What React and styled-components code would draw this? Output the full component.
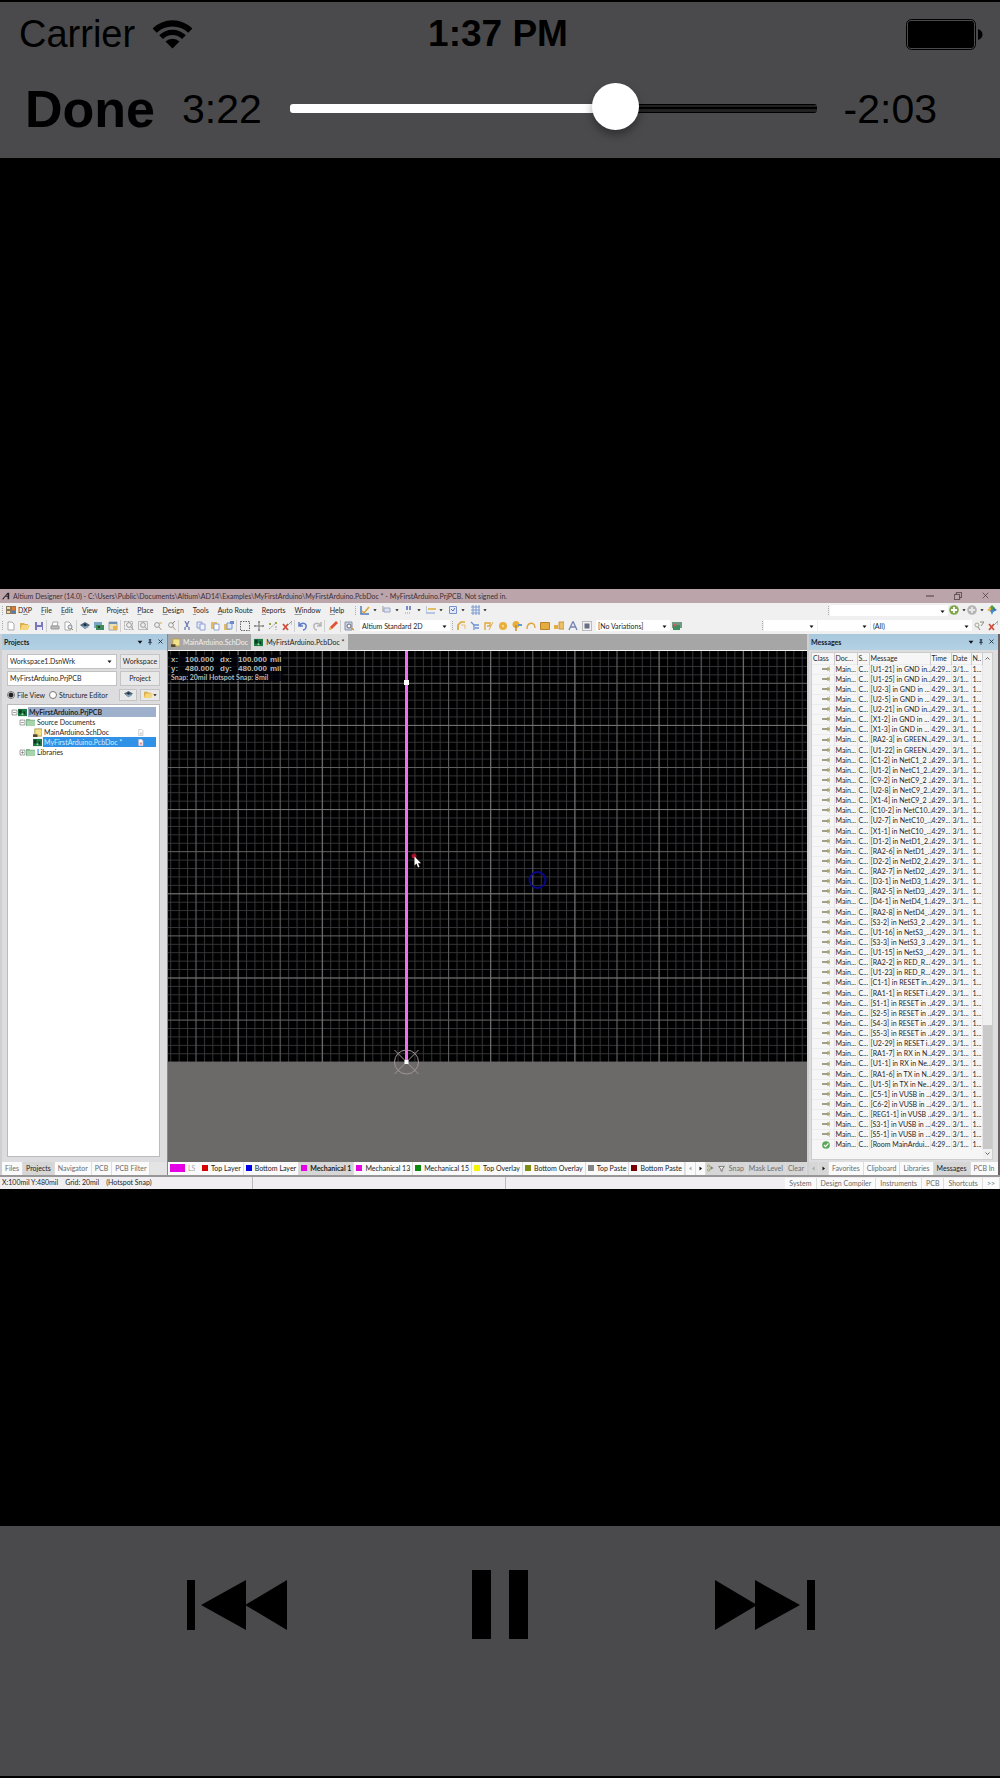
import React, {useState} from 'react';
import styled, {createGlobalStyle} from 'styled-components';

const GlobalStyle = createGlobalStyle`
    * {
        box-sizing: border-box;
    }
    body {
        margin: 0;
        background: #000;
    }
    button, input, select {
        margin: 0;
        padding: 0;
        border: 0;
        border-radius: 0;
        background: none;
        color: inherit;
        font: inherit;
    }
    select {
        appearance: none;
    }
`;

/* ---------- player ---------- */

const Player = styled.div`
    display: flex;
    flex-direction: column;
    min-height: 100vh;
    padding: 2px 0;
    background: #000;
    color: #000;
    font-family: "Liberation Sans", Arial, sans-serif;
`;

const TopBar = styled.header`
    height: 156px;
    background: #4a4a4c;
`;

const StatusLine = styled.div`
    display: grid;
    grid-template-columns: 1fr auto 1fr;
    align-items: center;
    height: 64px;
    padding: 0 17px 0 19px;
    font-size: 38px;
`;

const Carrier = styled.div`
    display: flex;
    align-items: center;
    gap: 18px;
`;

const Clock = styled.strong`
    margin-right: 6px;
    font-size: 37px;
`;

const Battery = styled.svg`
    justify-self: end;
`;

const Scrubber = styled.div`
    display: flex;
    align-items: center;
    height: 84px;
    padding: 0 63px 0 25px;
`;

const DoneButton = styled.button`
    margin-right: 27px;
    padding-top: 2px;
    font-size: 52px;
    font-weight: bold;
`;

const Time = styled.span`
    padding-top: 3px;
    font-size: 41px;
`;

const Track = styled.input`
    flex: 1;
    min-width: 0;
    height: 48px;
    margin: 0 27px 0 28px;
    appearance: none;

    &::-webkit-slider-runnable-track {
        height: 9px;
        border-radius: 3px;
        background:
            linear-gradient(#fff, #fff) 0 0 / 62% 100% no-repeat,
            linear-gradient(#000 0 1px, #222 1px 3px, #000 3px 5px, #222 5px 8px, #000 8px);
    }

    &::-webkit-slider-thumb {
        width: 47px;
        height: 47px;
        margin-top: -21px;
        border-radius: 50%;
        background: #fff;
        box-shadow: 0 5px 8px rgba(0, 0, 0, 0.35);
        appearance: none;
    }
`;

const Stage = styled.main`
    display: flex;
    flex: 1;
    flex-direction: column;
    justify-content: center;
    padding-top: 94px;
`;

const Controls = styled.footer`
    display: flex;
    align-items: flex-start;
    justify-content: space-between;
    height: 250px;
    padding: 43px 185px 0 187px;
    background: #4a4a4c;
`;

const ControlButton = styled.button`
    display: flex;
    align-items: center;
    height: 71px;
`;

/* ---------- designer window ---------- */

const Window = styled.section`
    overflow: hidden;
    background: #f1f0f1;
    color: #262626;
    font-family: Lato, "Open Sans", sans-serif;
    font-size: 7px;
    line-height: 10px;
    white-space: nowrap;
`;

const TitleBar = styled.div`
    display: flex;
    align-items: center;
    height: 14px;
    padding: 0 11px 0 2px;
    background: #bca4ab;
    color: #3a2f33;
`;

const Caption = styled.span`
    flex: 1;
    margin-left: 3px;
`;

const WindowButtons = styled.div`
    display: flex;
    gap: 20px;

    button {
        display: flex;
    }
`;

const Bar = styled.div`
    display: flex;
    align-items: center;
    height: ${props => props.$tall ? "16px" : "15px"};
    padding-bottom: 1px;
    background: #f1f0f1;
`;

const Grip = styled.i`
    flex: none;
    width: 4px;
    height: 9px;
    background: repeating-linear-gradient(#aaa 0 1px, transparent 1px 2px) 2px 0 / 1px 100% no-repeat;
`;

const Split = styled.i`
    flex: none;
    width: 2px;
    height: 12px;
    border-left: 1px solid #cfcfcf;
`;

const MenuItem = styled.button`
    margin-right: 9px;

    u {
        text-underline-offset: 1px;
        text-decoration-color: #999;
    }
`;

const ToolButton = styled.button`
    display: flex;
    align-items: center;
    justify-content: center;
    flex: none;
    width: ${props => props.$width}px;
    height: 14px;
    gap: 3px;
`;

const Spacer = styled.div`
    flex: 1;
`;

const Picker = styled.div`
    position: relative;
    flex: none;
    width: ${props => props.$width}px;
    height: 11px;
    margin-left: ${props => props.$gap || 0}px;
    background: #fff;

    select {
        width: 100%;
        height: 100%;
        padding-left: 2px;
    }

    svg {
        position: absolute;
        top: 4px;
        right: 3px;
        pointer-events: none;
    }
`;

const Desk = styled.div`
    display: flex;
    height: 541px;
    border-right: 2px solid #6b5f60;
    background: #dcdcdc;
`;

const Panel = styled.aside`
    display: flex;
    flex: none;
    flex-direction: column;
    width: ${props => props.$width}px;
    border-left: 2px solid #cfcfd1;
    background: #dddddf;
`;

const PanelHeader = styled.header`
    display: flex;
    align-items: center;
    height: 16px;
    padding: 0 2px 1px 2px;
    background: linear-gradient(#a8c8dd, #b4d1e4);
    color: #15202c;

    strong {
        flex: 1;
    }

    button {
        display: flex;
        justify-content: center;
        width: 10px;
    }
`;

const ProjectForm = styled.form`
    display: grid;
    grid-template-columns: 1fr 40px;
    gap: 2px 3px;
    padding: 4px 7px 2px 5px;
`;

const Field = styled.div`
    position: relative;
    height: 15px;
    border: 1px solid #c2c2c2;
    background: #fff;

    select, input {
        width: 100%;
        height: 12px;
        padding-left: 2px;
        vertical-align: top;
    }

    svg {
        position: absolute;
        top: 4px;
        right: 4px;
        pointer-events: none;
    }
`;

const FormButton = styled.button`
    display: flex;
    align-items: center;
    justify-content: center;
    height: ${props => props.$small ? "12px" : "15px"};
    padding-bottom: 1px;
    border: 1px solid #c4c4c4;
    background: #e9e9e9;
`;

const ViewRow = styled.div`
    display: flex;
    align-items: center;
    grid-column: 1 / -1;
    height: 14px;

    label {
        display: flex;
        align-items: center;
        gap: 2px;
        margin-right: 4px;
    }

    input {
        width: 8px;
        height: 8px;
        border: 1px solid #777;
        border-radius: 50%;
        background: #fff;
        appearance: none;
    }

    input:checked {
        background: radial-gradient(#222 0 2px, #fff 3px);
    }

    button {
        width: 18px;
    }

    button:last-child {
        width: 20px;
        margin-left: 3px;
    }
`;

const Tree = styled.ul`
    flex: 1;
    margin: 0 7px 5px 5px;
    padding: 2px 3px;
    border: 1px solid #bbb;
    background: #fff;
    list-style: none;
`;

const TreeRow = styled.li`
    display: flex;
    align-items: center;
    height: 10px;
    padding-left: ${props => props.$indent}px;
    font-weight: ${props => props.$bold ? "bold" : "normal"};

    > svg {
        flex: none;
    }
`;

const TreeLabel = styled.span`
    display: flex;
    flex: 1;
    align-items: center;
    justify-content: space-between;
    height: 10px;
    margin-left: 1px;
    padding: 0 12px 0 1px;
    background: ${props => props.$fill || "none"};
    color: ${props => props.$selected ? "#d8ecfc" : "inherit"};
`;

const BottomTabs = styled.nav`
    display: flex;
    align-items: stretch;
    flex: none;
    height: 13px;
    overflow: hidden;
    background: #e4e4e4;
`;

const BottomTab = styled.button`
    display: flex;
    align-items: center;
    gap: 3px;
    flex: none;
    padding: 0 ${props => props.$pad || 4}px 1px;
    border-right: 1px solid #ddd;
    background: ${props => props.$active ? "#d6d6d6" : "#fafafa"};
    color: ${props => props.$dark ? "#222" : "#6c6c6c"};
    font-weight: ${props => props.$bold ? "bold" : "normal"};
`;

const Editor = styled.section`
    display: flex;
    flex: 1;
    flex-direction: column;
    min-width: 0;
    border-left: 1px solid #888;
    background: #a6a6a6;
`;

const DocTabs = styled.nav`
    display: flex;
    height: 17px;
    border-bottom: 1px solid #f4f4f4;
`;

const DocTab = styled.button`
    display: flex;
    align-items: center;
    gap: 3px;
    padding: 0 3px;
    background: ${props => props.$active ? "#dedede" : "#a6a6a6"};
    color: ${props => props.$active ? "#222" : "#f0f0f0"};
`;

const Board = styled.div`
    position: relative;
    flex: 1;
    min-height: 0;
    background: #6b6a68;

    > svg {
        display: block;
        width: 100%;
        height: 100%;
    }
`;

const Readout = styled.div`
    position: absolute;
    top: 4px;
    left: 2px;
    padding: 0 1px;
    background: rgba(0, 0, 12, 0.7);
    color: #b9b9b1;
    font-family: "Liberation Sans", Arial, sans-serif;
    font-size: 8px;
    font-weight: bold;
    line-height: 9px;

    dl {
        display: grid;
        grid-template-columns: 14px 35px 18px 32px auto;
        margin: 0;
    }

    dd, dt {
        margin: 0;
    }

    p {
        margin: 0;
        font-family: Lato, "Open Sans", sans-serif;
        font-size: 7px;
        line-height: 8px;
    }
`;

const Swatch = styled.i`
    flex: none;
    width: ${props => props.$wide ? "15px" : "6px"};
    height: ${props => props.$wide ? "8px" : "6px"};
    background: ${props => props.$color};
`;

const LayerSet = styled.button`
    display: flex;
    align-items: center;
    flex: none;
    width: 32px;
    padding: 0 0 1px 2px;
    gap: 3px;
    background: #fafafa;
    color: #aaa;
`;

const MessageBox = styled.div`
    display: flex;
    flex: 1;
    margin: 2px 5px 2px 2px;
    overflow: hidden;
    border: 1px solid #ccc;
    background: #f6f6f6;
`;

const MessageTable = styled.table`
    width: 100%;
    min-width: 0;
    align-self: flex-start;
    border-collapse: collapse;
    table-layout: fixed;

    th, td {
        height: 10px;
        padding: 0 0 0 1px;
        border-right: 1px solid #e6e6e6;
        font-weight: normal;
        line-height: 9px;
        text-align: left;
    }

    th {
        height: 11px;
        border-right-color: #ccc;
    }

    tbody td {
        border-top: 1px solid #ececec;
    }

    tbody tr:nth-child(8n) td {
        height: 11px;
    }

    td svg {
        display: block;
        margin-left: 9px;
    }
`;

const ScrollBar = styled.div`
    display: flex;
    flex: none;
    flex-direction: column;
    align-items: center;
    width: 10px;
    padding: 3px 0;
    background: #f0f0f0;

    i {
        width: 100%;
        height: 124px;
        margin-bottom: 2px;
        background: #c9c9c9;
    }
`;

const StatusBar = styled.footer`
    display: flex;
    align-items: center;
    height: 14px;
    border-top: 2px solid #979797;
    background: #f0eef0;

    span {
        margin-left: 2px;
        margin-right: 5px;
    }
`;

const StatusCell = styled.div`
    flex: none;
    align-self: stretch;
    width: 253px;
    border-right: 1px solid #bbb;
`;

/* ---------- icons ---------- */

const Glyph = ({size = 10, children}) => (
    <svg width={size} height={size} viewBox="0 0 10 10" fill="none" strokeWidth="1">
        {children}
    </svg>
);

const Lens = () => <><circle cx="5" cy="4" r="2.4" stroke="#999" /><path d="M7 6l2.5 3" stroke="#a98" /></>;
const Sheet = ({x = 2, y = 1}) => <path d={`M${x} ${y}h4l2 2v6h-6z`} fill="#fff" stroke="#aaa" />;

const icons = {
    dxp: <><path d="M0 1h10v8H0z" fill="#8d7a5e" /><path d="M1 2h3v2H1zM1 6h3v2H1z" fill="#e8d7a0" /><path d="M6 2h3v3H6z" fill="#e27a2f" /><path d="M6 6h3v2H6z" fill="#5a78b8" /></>,
    page: <Sheet />,
    open: <><path d="M0 2h4l1 1h3v6H0z" fill="#d9b04e" /><path d="M2 4h8L8 9H0z" fill="#f6d67a" /></>,
    save: <><path d="M1 1h8v8H1z" fill="#7a78b8" /><path d="M3 1h4v3H3zM3 6h5v3H3z" fill="#e9e9f7" /></>,
    print: <><path d="M3 1h5L7 5H2z" fill="#fff" stroke="#aaa" /><path d="M1 5h8v3H1z" fill="#bbb" stroke="#999" /></>,
    preview: <><Sheet x={1} /><circle cx="6" cy="6" r="2" stroke="#888" fill="#def" /><path d="M7 7l2 2" stroke="#986" /></>,
    eye: <><path d="M0 4l5-3 5 3-5 4z" fill="#54687c" /><path d="M2 5l3 3 4-2-4-2z" fill="#87a4b9" /><circle cx="5" cy="4" r="1.4" fill="#1c3144" /></>,
    board: <><path d="M0 1h8v6H0z" fill="#7aa6c4" /><path d="M2 4h8v5H2z" fill="#3f8a5a" /><path d="M4 5h2v2H4z" fill="#1a4b2e" /></>,
    panel: <><path d="M1 1h8v8H1z" fill="#efe0b4" stroke="#9fa8b0" /><path d="M1 1h8v2H1z" fill="#6b8fb5" /><path d="M5 5h4v4H5z" fill="#e5b44e" /></>,
    zoomAll: <><path d="M.5.5h8v8h-8z" stroke="#aaa" strokeDasharray="2 1" /><Lens /></>,
    zoomArea: <><path d="M.5.5h9v8h-9z" fill="#eee" stroke="#bbb" /><Lens /></>,
    zoomPlus: <><Lens /><path d="M7 2h3" stroke="#d9a93a" /></>,
    zoomPick: <><Lens /><path d="M6 3l3-3" stroke="#888" /></>,
    cut: <path d="M3 0l3 6M7 0L4 6M3 9V6M7 9V6" stroke="#7484b5" strokeWidth="1.4" />,
    copy: <><path d="M1 1h5v6H1z" fill="#dde6f8" stroke="#8fa1cf" /><path d="M4 3h5v6H4z" fill="#eef3ff" stroke="#8fa1cf" /></>,
    paste: <><path d="M1 1h6v7H1z" fill="#e1bc62" /><path d="M4 3h5v6H4z" fill="#fff" stroke="#8fa1cf" /></>,
    pasteArray: <><path d="M0 3h6v6H0z" fill="#e1bc62" /><path d="M3 2h5v6H3z" fill="#dfe8fa" stroke="#7b93ca" /><path d="M6 0h4v3H6z" fill="#6e89c8" /></>,
    marquee: <path d="M.5.5h9v9h-9z" stroke="#666" strokeDasharray="1.5 1" />,
    move: <path d="M5 0v10M0 5h10M4 1h2M4 9h2M1 4v2M9 4v2" stroke="#777" />,
    nodes: <><path d="M1 8l7-6M8 5v4" stroke="#999" strokeDasharray="2 1" /><path d="M1 2h2v2H1zM7 1h2v2H7z" fill="#9aa93f" /></>,
    clear: <><path d="M1 3l5 6M6 3L1 9" stroke="#d04a38" strokeWidth="1.7" /><path d="M6 4l4-4v4" stroke="#999" /></>,
    undo: <path d="M1 1v4h4M1.500 4.500C4 1 9 2 8 6c0 2-2 3-3 3" stroke="#5c7cc9" strokeWidth="1.5" />,
    redo: <path d="M9 1v4H5M8.500 4.500C6 1 1 2 2 6c0 2 2 3 3 3" stroke="#b5b5b5" strokeWidth="1.5" />,
    pencil: <><path d="M1 9l1-3 6-6 2 2-6 6z" fill="#e34f35" /><path d="M1 9l1-3 2 2z" fill="#e9ca55" /></>,
    find: <><path d="M1 1h7v8H1z" fill="#c9d3e4" stroke="#8a94a8" /><circle cx="5" cy="5" r="2" stroke="#667" fill="#fff" /><path d="M7 7l3 2" stroke="#c79a35" strokeWidth="1.5" /></>,
    route: <><path d="M2 9V4l3-3h4" stroke="#e0a63a" strokeWidth="1.7" /><path d="M5 4h4v4" stroke="#e9c169" /></>,
    multiRoute: <path d="M1 1l3 3v5M4 4h5M5 7h4" stroke="#6f8fd0" strokeWidth="1.3" />,
    diffRoute: <><path d="M1 9V2h5v3H3" stroke="#e0a63a" strokeWidth="1.4" /><path d="M5 9l4-8" stroke="#d9b05a" /></>,
    pad: <><circle cx="5" cy="5" r="4" fill="#e9ae3b" /><circle cx="5" cy="5" r="1.200" fill="#f9dc8c" /></>,
    via: <><circle cx="4" cy="3.500" r="3.500" fill="#e9ae3b" /><path d="M4 4v6" stroke="#c78c22" strokeWidth="1.500" /><path d="M6 3h4v2H6z" fill="#5e9ad0" /></>,
    arc: <path d="M1 8C1 1 9 0 9 7" stroke="#e0a63a" strokeWidth="1.400" />,
    fill: <path d="M.5 1.500h9v7h-9z" fill="#e5ac3f" stroke="#b88528" />,
    poly: <><path d="M0 4h4v4H0z" fill="#e5ac3f" /><path d="M5 1h5v7H5z" fill="#ecc062" stroke="#c6943a" /></>,
    text: <path d="M1 9l3.700-8h.6L9 9M2.500 6h5" stroke="#7683b0" strokeWidth="1.300" />,
    chip: <><path d="M.5.5h9v9h-9z" stroke="#888" strokeDasharray="1 1" /><path d="M2.500 2.500h5v5h-5z" fill="#6a6f85" /></>,
    variant: <><path d="M0 1h10v6H0z" fill="#6f9a86" /><path d="M1 4h7v5H1z" fill="#3d8e5d" /><circle cx="3" cy="4" r="1.500" fill="#d65555" /></>,
    draw: <><path d="M1 1v8h8" stroke="#4d7ac0" strokeWidth="1.500" /><path d="M2 6l2 2 5-6" stroke="#d9a43a" strokeWidth="1.500" /></>,
    align: <><path d="M1 1v6" stroke="#999" /><path d="M2 3h6v4H2z" fill="#dde3f1" stroke="#9aa6c2" /></>,
    search: <><path d="M2 1h2v4H2zM5 1h2v4H5z" fill="#7c8ac4" /><path d="M1 8h5" stroke="#999" strokeDasharray="1 1" /></>,
    dimension: <><path d="M0 1v8M1 8h8" stroke="#7c9bd3" /><path d="M2 3h8v2H2z" fill="#e0c063" /></>,
    room: <><path d="M1.500 1.500h7v7h-7z" fill="#e4ebf8" stroke="#7693cf" /><path d="M3 4l2 2 2-3" stroke="#5d6f9f" /></>,
    grid: <path d="M1 2h9M1 5h9M1 8h9M3 0v10M6 0v10M9 0v10" stroke="#7b9ad0" />,
    forward: <><circle cx="5" cy="5" r="4.800" fill="#7fa84d" /><path d="M5 2v6M2 5h6" stroke="#fff" strokeWidth="1.800" /></>,
    back: <><circle cx="5" cy="5" r="4.800" fill="#b4b4b4" /><path d="M5 2v6M2 5h6" stroke="#e8e8e8" strokeWidth="1.800" /></>,
    home: <><path d="M5 0L2 3l3 3 3-3z" fill="#4aa04a" /><path d="M0 5l4-3v5z" fill="#e9b43c" /><path d="M10 5L6 2v5z" fill="#3f6fc4" /><path d="M5 10L3 5h4z" fill="#3a8bd0" /></>,
    filter: <><circle cx="3" cy="4" r="2" stroke="#a5a98f" /><path d="M4 6l2 3M6 1h4L7 5" stroke="#888" /></>,
    folder: <><path d="M0 1h4l1 1h5v7H0z" fill="#7fb68a" /><path d="M1 3h9v6H1z" fill="#a9d3ac" /></>,
    sch: <><path d="M2 1h8v8H2z" fill="#f4e28a" stroke="#b09a4e" /><path d="M0 7h5v3H0z" fill="#554a2a" /></>,
    pcb: <><path d="M0 1h10v8H0z" fill="#1d7a44" /><path d="M1 2h3v4H1zM6 4h2v3H6z" fill="#0a3a20" /><path d="M4 6h2v2H4z" fill="#9bd9a8" /></>,
    doc: <><path d="M2.500.5h4l2 2v7h-6z" fill="#fff" stroke="#bbb" /><path d="M4 5h3v3H4z" fill="#ccc" /></>,
    redDoc: <><path d="M2.500.5h4l2 2v7h-6z" fill="#fff" stroke="#e3b7c0" /><path d="M4 5h3v3H4z" fill="#d88" /></>,
    minus: <path d="M1.500 1.500h7v7h-7zM3 5h4" fill="#fff" stroke="#777" />,
    plus: <path d="M1.500 1.500h7v7h-7zM3 5h4M5 3v4" fill="#fff" stroke="#777" />,
    pin: <path d="M3 1h4M4 1v5M6 1v5M2 6h6M5 6v4" stroke="#1d2b3a" strokeWidth="1.300" />,
    close: <path d="M1 1l8 8M9 1L1 9" stroke="#1d2b3a" strokeWidth="1.700" />,
    minimize: <path d="M0 5h10" stroke="#43383c" strokeWidth="1.200" />,
    restore: <path d="M.5 3h6.500v6.500H.5zM3 3V.5h6.500V7H7" stroke="#43383c" />,
    exit: <path d="M1 1l8 8M9 1L1 9" stroke="#43383c" />,
    net: <><path d="M0 5h6" stroke="#4f4d2c" strokeWidth="1.300" /><path d="M9.500 1v8" stroke="#cfcb7a" /><circle cx="7.500" cy="5" r="1.500" fill="#f3ef9a" stroke="#77733a" /></>,
    ok: <><circle cx="5" cy="5" r="4.800" fill="#59a85a" /><path d="M2.500 5l2 2 3.500-4" stroke="#fff" strokeWidth="1.500" /></>,
    down: <path d="M1 3h8L5 8z" fill="#111" />,
    left: <path d="M7 1v8L2 5z" fill="#aaa" />,
    right: <path d="M3 1v8l5-4z" fill="#111" />,
    chevronUp: <path d="M1 7l4-4 4 4" stroke="#444" strokeWidth="1.600" />,
    chevronDown: <path d="M1 3l4 4 4-4" stroke="#444" strokeWidth="1.600" />,
    mask: <><circle cx="2" cy="2.500" r="1.500" stroke="#a3a13a" /><circle cx="2" cy="7.500" r="1.500" stroke="#a3a13a" /><path d="M5 3v4M5 5h3" stroke="#555" /></>,
    funnel: <path d="M1 2h8L6 6v3L4 8V6z" stroke="#555" fill="#eee" />,
    logo: <path d="M0 9L7 1h2v8H7V6H4L2 9zM5 5h2V3z" fill="#2a2226" />,
};

const Icon = ({name, size}) => <Glyph size={size}>{icons[name]}</Glyph>;

const WifiIcon = () => (
    <svg width="39" height="29" viewBox="0 0 39 29">
        <path d="M-.5 8.500A28.500 28.500 0 0 1 39.500 8.500L35.200 12.800A22.500 22.500 0 0 0 3.800 12.800Z" />
        <path d="M6.200 15.200A19 19 0 0 1 32.800 15.200L29 19A13.500 13.500 0 0 0 10 19Z" />
        <path d="M12.500 21.500A10 10 0 0 1 26.500 21.500L19.500 28.500Z" />
    </svg>
);

const SkipBack = () => (
    <svg width="100" height="50" viewBox="0 0 100 50">
        <path d="M0 0h8v50H0zM14 25L59 0v50zM58 25L100 0v50z" />
    </svg>
);

const SkipForward = () => (
    <svg width="100" height="50" viewBox="0 0 100 50">
        <path d="M92 0h8v50h-8zM85 25L40 0v50zM42 25L0 0v50z" />
    </svg>
);

const PauseIcon = () => (
    <svg width="58" height="69" viewBox="0 0 58 69">
        <path d="M0 0h19v69H0zM37 0h19v69H37z" />
    </svg>
);

/* ---------- data ---------- */

const menus = [
    ["D", "X", "P"], ["", "F", "ile"], ["", "E", "dit"], ["", "V", "iew"], ["Proje", "c", "t"], ["", "P", "lace"],
    ["", "D", "esign"], ["", "T", "ools"], ["", "A", "uto Route"], ["", "R", "eports"], ["", "W", "indow"], ["", "H", "elp"],
];

const dropTools = ["draw", "align", "search", "dimension", "room", "grid"];

const toolGroups = [
    ["page", "open", "save"],
    ["print", "preview"],
    ["eye", "board", "panel"],
    ["zoomAll", "zoomArea", "zoomPlus", "zoomPick"],
    ["cut", "copy", "paste", "pasteArray"],
    ["marquee", "move", "nodes", "clear"],
    ["undo", "redo"],
    ["pencil"],
    ["find"],
];

const placeTools = ["route", "multiRoute", "diffRoute", "pad", "via", "arc", "fill", "poly", "text", "chip"];

const layers = [
    ["Top Layer", "#d80000"],
    ["Bottom Layer", "#0000e8"],
    ["Mechanical 1", "#e600e6"],
    ["Mechanical 13", "#e600e6"],
    ["Mechanical 15", "#0d8a0d"],
    ["Top Overlay", "#f5f500"],
    ["Bottom Overlay", "#7d8c12"],
    ["Top Paste", "#858585"],
    ["Bottom Paste", "#780000"],
];

const messages = [
    "[U1-21] in GND in...", "[U1-25] in GND in...", "[U2-3] in GND in ...", "[U2-5] in GND in ...",
    "[U2-21] in GND in...", "[X1-2] in GND in ...", "[X1-3] in GND in ...", "[RA2-3] in GREEN...",
    "[U1-22] in GREEN...", "[C1-2] in NetC1_2 ...", "[U1-2] in NetC1_2...", "[C9-2] in NetC9_2 ...",
    "[U2-8] in NetC9_2...", "[X1-4] in NetC9_2 ...", "[C10-2] in NetC10...", "[U2-7] in NetC10_...",
    "[X1-1] in NetC10_...", "[D1-2] in NetD1_2...", "[RA2-6] in NetD1_...", "[D2-2] in NetD2_2...",
    "[RA2-7] in NetD2_...", "[D3-1] in NetD3_1...", "[RA2-5] in NetD3_...", "[D4-1] in NetD4_1...",
    "[RA2-8] in NetD4_...", "[S3-2] in NetS3_2 ...", "[U1-16] in NetS3_...", "[S3-3] in NetS3_3 ...",
    "[U1-15] in NetS3_...", "[RA2-2] in RED_R...", "[U1-23] in RED_R...", "[C1-1] in RESET in...",
    "[RA1-1] in RESET i...", "[S1-1] in RESET in ...", "[S2-5] in RESET in ...", "[S4-3] in RESET in ...",
    "[S5-3] in RESET in ...", "[U2-29] in RESET i...", "[RA1-7] in RX in N...", "[U1-1] in RX in Ne...",
    "[RA1-6] in TX in N...", "[U1-5] in TX in Ne...", "[C5-1] in VUSB in ...", "[C6-2] in VUSB in ...",
    "[REG1-1] in VUSB ...", "[S3-1] in VUSB in ...", "[S5-1] in VUSB in ...", "[Room MainArdui...",
];

/* ---------- parts ---------- */

const Select = ({label, value}) => (
    <>
        <select aria-label={label} defaultValue={value}>
            <option>{value}</option>
        </select>
        <Icon name="down" size={5} />
    </>
);

const Tool = ({name, drop, width = 14}) => (
    <ToolButton type="button" aria-label={name} $width={width}>
        <Icon name={name} size={10} />
        {drop && <Icon name="down" size={4} />}
    </ToolButton>
);

const PanelTitle = ({title}) => (
    <PanelHeader>
        <strong>{title}</strong>
        <button type="button" aria-label="Menu"><Icon name="down" size={6} /></button>
        <button type="button" aria-label="Pin"><Icon name="pin" size={6} /></button>
        <button type="button" aria-label="Close"><Icon name="close" size={5} /></button>
    </PanelHeader>
);

const Toolbars = () => (
    <>
        <Bar>
            <Grip />
            <Tool name="dxp" />
            {menus.map(([before, key, after]) => (
                <MenuItem type="button" key={before + key + after}>{before}<u>{key}</u>{after}</MenuItem>
            ))}
            <Grip />
            {dropTools.map(name => <Tool key={name} name={name} width={22} drop />)}
            <Spacer />
            <Grip />
            <Picker $width={118}><Select label="Address" value="" /></Picker>
            <Tool name="forward" width={18} drop />
            <Tool name="back" width={18} drop />
            <Tool name="home" width={16} />
        </Bar>
        <Bar $tall>
            <Grip />
            {toolGroups.map((group, i) => (
                <React.Fragment key={group[0]}>
                    {i > 0 && <Split />}
                    {group.map(name => <Tool key={name} name={name} />)}
                </React.Fragment>
            ))}
            <Picker $width={90} $gap={4}><Select label="View configuration" value="Altium Standard 2D" /></Picker>
            <Grip />
            {placeTools.map(name => <Tool key={name} name={name} />)}
            <Picker $width={74} $gap={2}><Select label="Variant" value="[No Variations]" /></Picker>
            <Tool name="variant" />
            <Spacer />
            <Grip />
            <Picker $width={53}><Select label="Net" value="" /></Picker>
            <Picker $width={52} $gap={1}><Select label="Component" value="" /></Picker>
            <Picker $width={101} $gap={1}><Select label="Filter" value="(All)" /></Picker>
            <Tool name="filter" />
            <Tool name="clear" />
        </Bar>
    </>
);

const ProjectsPanel = () => (
    <Panel $width={167}>
        <PanelTitle title="Projects" />
        <ProjectForm>
            <Field><Select label="Workspace" value="Workspace1.DsnWrk" /></Field>
            <FormButton type="button">Workspace</FormButton>
            <Field><input aria-label="Project" defaultValue="MyFirstArduino.PrjPCB" /></Field>
            <FormButton type="button">Project</FormButton>
            <ViewRow>
                <label><input type="radio" name="view" defaultChecked />File View</label>
                <label><input type="radio" name="view" />Structure Editor</label>
                <Spacer />
                <FormButton type="button" aria-label="Inspect" $small><Icon name="eye" size={9} /></FormButton>
                <FormButton type="button" aria-label="Open" $small>
                    <Icon name="open" size={9} /><Icon name="down" size={4} />
                </FormButton>
            </ViewRow>
        </ProjectForm>
        <Tree>
            <TreeRow $indent={0} $bold>
                <Icon name="minus" size={7} /><Icon name="pcb" size={9} />
                <TreeLabel $fill="#9fb0cc">MyFirstArduino.PrjPCB</TreeLabel>
            </TreeRow>
            <TreeRow $indent={8}>
                <Icon name="minus" size={7} /><Icon name="folder" size={9} />
                <TreeLabel>Source Documents</TreeLabel>
            </TreeRow>
            <TreeRow $indent={22}>
                <Icon name="sch" size={9} />
                <TreeLabel>MainArduino.SchDoc<Icon name="doc" size={7} /></TreeLabel>
            </TreeRow>
            <TreeRow $indent={22}>
                <Icon name="pcb" size={9} />
                <TreeLabel $fill="#2f92e6" $selected>MyFirstArduino.PcbDoc *<Icon name="redDoc" size={7} /></TreeLabel>
            </TreeRow>
            <TreeRow $indent={8}>
                <Icon name="plus" size={7} /><Icon name="folder" size={9} />
                <TreeLabel>Libraries</TreeLabel>
            </TreeRow>
        </Tree>
        <BottomTabs>
            <BottomTab $pad={3}>Files</BottomTab>
            <BottomTab $pad={3} $active $dark>Projects</BottomTab>
            <BottomTab $pad={3}>Navigator</BottomTab>
            <BottomTab $pad={3}>PCB</BottomTab>
            <BottomTab $pad={3}>PCB Filter</BottomTab>
        </BottomTabs>
    </Panel>
);

// board origin sits at 238,411 and the grid steps 8.42 from there
const BoardView = () => (
    <Board>
        <svg>
            <defs>
                <pattern id="fine" x="238" y="410.700" width="8.420" height="8.420" patternUnits="userSpaceOnUse">
                    <path d="M0 .5h8.420M.5 0v8.420" stroke="#80808a" strokeOpacity=".42" />
                </pattern>
                <pattern id="mid" x="238" y="410.700" width="42.100" height="42.100" patternUnits="userSpaceOnUse">
                    <path d="M0 .5h42.100M.5 0v42.100" stroke="#8c8c8a" strokeOpacity=".5" />
                </pattern>
                <pattern id="coarse" x="238" y="410.700" width="84.200" height="84.200" patternUnits="userSpaceOnUse">
                    <path d="M0 .5h84.200M.5 0v84.200" stroke="#a0a09c" strokeOpacity=".35" />
                </pattern>
            </defs>
            <rect width="100%" height="411" fill="#000" />
            <rect width="100%" height="411" fill="url(#fine)" />
            <rect width="100%" height="411" fill="url(#mid)" />
            <rect width="100%" height="411" fill="url(#coarse)" />
            <path d="M238.500 0v411" stroke="#f070f2" strokeWidth="3" />
            <path d="M236 29h5v5h-5z" fill="#fff" />
            <g stroke="#a3949a" fill="none">
                <circle cx="238.500" cy="411" r="12" />
                <path d="M226.500 399l24 24M250.500 399l-24 24" />
            </g>
            <path d="M236.500 409h4v4h-4z" fill="#fff" />
            <circle cx="369.500" cy="229" r="8" fill="none" stroke="#08088c" strokeWidth="2" />
            <circle cx="246" cy="205" r="2.500" fill="#a8102c" />
            <path d="M246.500 205.500v9l2-2 1.500 4 1.500-.700-1.500-3.600h3z" fill="#fff" />
        </svg>
        <Readout>
            <dl>
                <dt>x:</dt><dd>100.000</dd><dt>dx:</dt><dd>100.000</dd><dd>mil</dd>
                <dt>y:</dt><dd>480.000</dd><dt>dy:</dt><dd>480.000</dd><dd>mil</dd>
            </dl>
            <p>Snap: 20mil Hotspot Snap: 8mil</p>
        </Readout>
    </Board>
);

const EditorPane = () => (
    <Editor>
        <DocTabs>
            <DocTab><Icon name="sch" size={9} />MainArduino.SchDoc</DocTab>
            <DocTab $active><Icon name="pcb" size={9} />MyFirstArduino.PcbDoc *</DocTab>
        </DocTabs>
        <BoardView />
        <BottomTabs>
            <LayerSet><Swatch $wide $color="#e600e6" />LS</LayerSet>
            {layers.map(([name, color]) => (
                <BottomTab key={name} $dark $pad={2} $bold={name === "Mechanical 1"} $active={name === "Mechanical 1"}>
                    <Swatch $color={color} />{name}
                </BottomTab>
            ))}
            <Spacer />
            <BottomTab aria-label="Previous layer" $pad={2}><Icon name="left" size={5} /></BottomTab>
            <BottomTab aria-label="Next layer" $pad={2}><Icon name="right" size={5} /></BottomTab>
            <BottomTab aria-label="Mask" $pad={1} $active><Icon name="mask" size={8} /><Icon name="funnel" size={7} /></BottomTab>
            <BottomTab $pad={2} $active>Snap</BottomTab>
            <BottomTab $pad={2} $active>Mask Level</BottomTab>
            <BottomTab $pad={2} $active>Clear</BottomTab>
        </BottomTabs>
    </Editor>
);

const MessagesPanel = () => (
    <Panel $width={191}>
        <PanelTitle title="Messages" />
        <MessageBox>
            <MessageTable>
                <colgroup>
                    <col width="22" /><col width="23" /><col width="12" /><col width="61" />
                    <col width="21" /><col width="20" /><col width="11" />
                </colgroup>
                <thead>
                    <tr>
                        <th>Class</th><th>Doc...</th><th>S...</th><th>Message</th><th>Time</th><th>Date</th><th>N..</th>
                    </tr>
                </thead>
                <tbody>
                    {messages.map((text, i) => (
                        <tr key={text}>
                            <td><Icon name={i === messages.length - 1 ? "ok" : "net"} size={8} /></td>
                            <td>Main...</td>
                            <td>C...</td>
                            <td>{text}</td>
                            <td>4:29...</td>
                            <td>3/1...</td>
                            <td>1...</td>
                        </tr>
                    ))}
                </tbody>
            </MessageTable>
            <ScrollBar>
                <Icon name="chevronUp" size={5} />
                <Spacer />
                <i />
                <Icon name="chevronDown" size={5} />
            </ScrollBar>
        </MessageBox>
        <BottomTabs>
            <BottomTab aria-label="Scroll left" $pad={2} $active><Icon name="left" size={5} /></BottomTab>
            <BottomTab aria-label="Scroll right" $pad={2} $active><Icon name="right" size={5} /></BottomTab>
            <BottomTab $pad={3}>Favorites</BottomTab>
            <BottomTab $pad={3}>Clipboard</BottomTab>
            <BottomTab $pad={3}>Libraries</BottomTab>
            <BottomTab $pad={3} $active $dark>Messages</BottomTab>
            <BottomTab $pad={3}>PCB In</BottomTab>
        </BottomTabs>
    </Panel>
);

const DesignerWindow = () => (
    <Window>
        <TitleBar>
            <Icon name="logo" size={8} />
            <Caption>
                {"Altium Designer (14.0) - C:\\Users\\Public\\Documents\\Altium\\AD14\\Examples\\MyFirstArduino\\MyFirstArduino.PcbDoc * - MyFirstArduino.PrjPCB. Not signed in."}
            </Caption>
            <WindowButtons>
                <button type="button" aria-label="Minimize"><Icon name="minimize" size={8} /></button>
                <button type="button" aria-label="Restore"><Icon name="restore" size={8} /></button>
                <button type="button" aria-label="Close window"><Icon name="exit" size={7} /></button>
            </WindowButtons>
        </TitleBar>
        <Toolbars />
        <Desk>
            <ProjectsPanel />
            <EditorPane />
            <MessagesPanel />
        </Desk>
        <StatusBar>
            <StatusCell>
                <span>X:100mil Y:480mil</span>
                <span>Grid: 20mil</span>
                <span>(Hotspot Snap)</span>
            </StatusCell>
            <StatusCell />
            <Spacer />
            <BottomTab>System</BottomTab>
            <BottomTab>Design Compiler</BottomTab>
            <BottomTab>Instruments</BottomTab>
            <BottomTab>PCB</BottomTab>
            <BottomTab>Shortcuts</BottomTab>
            <BottomTab>&gt;&gt;</BottomTab>
        </StatusBar>
    </Window>
);

const App = () => {
    const [position, setPosition] = useState(63);

    return (
        <Player>
            <GlobalStyle />
            <TopBar>
                <StatusLine>
                    <Carrier>Carrier<WifiIcon /></Carrier>
                    <Clock>1:37 PM</Clock>
                    <Battery width="77" height="31" viewBox="0 0 77 31">
                        <rect x=".5" y=".5" width="69" height="30" rx="5" fill="none" stroke="#000" />
                        <rect x="2" y="2" width="66" height="27" rx="3" />
                        <path d="M72 10c6 2 6 9 0 11z" />
                    </Battery>
                </StatusLine>
                <Scrubber>
                    <DoneButton type="button">Done</DoneButton>
                    <Time>3:22</Time>
                    <Track
                        type="range"
                        aria-label="Playback position"
                        value={position}
                        onChange={e => setPosition(Number(e.target.value))} />
                    <Time>-2:03</Time>
                </Scrubber>
            </TopBar>
            <Stage>
                <DesignerWindow />
            </Stage>
            <Controls>
                <ControlButton type="button" aria-label="Previous"><SkipBack /></ControlButton>
                <ControlButton type="button" aria-label="Pause"><PauseIcon /></ControlButton>
                <ControlButton type="button" aria-label="Next"><SkipForward /></ControlButton>
            </Controls>
        </Player>
    );
};

export default App;
